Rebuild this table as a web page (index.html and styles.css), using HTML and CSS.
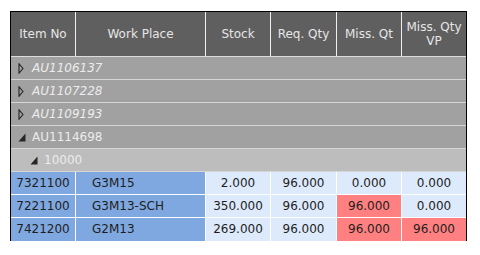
FILE: index.html
```html
<!DOCTYPE html>
<html>
<head>
<meta charset="utf-8">
<link rel="stylesheet" href="styles.css">
</head>
<body>
<div class="grid">
  <div class="row head">
    <div class="hc">Item No</div>
    <div class="hc">Work Place</div>
    <div class="hc">Stock</div>
    <div class="hc">Req. Qty</div>
    <div class="hc">Miss. Qt</div>
    <div class="hc">Miss. Qty VP</div>
  </div>
  <div class="group collapsed">
    <svg class="tri" width="6" height="11" viewBox="0 0 6 11"><path d="M1 0.8 L5 5.5 L1 10.2 Z" fill="none" stroke="#262626" stroke-width="1.1" stroke-linejoin="miter"/></svg>
    <span>AU1106137</span>
  </div>
  <div class="group collapsed">
    <svg class="tri" width="6" height="11" viewBox="0 0 6 11"><path d="M1 0.8 L5 5.5 L1 10.2 Z" fill="none" stroke="#262626" stroke-width="1.1" stroke-linejoin="miter"/></svg>
    <span>AU1107228</span>
  </div>
  <div class="group collapsed">
    <svg class="tri" width="6" height="11" viewBox="0 0 6 11"><path d="M1 0.8 L5 5.5 L1 10.2 Z" fill="none" stroke="#262626" stroke-width="1.1" stroke-linejoin="miter"/></svg>
    <span>AU1109193</span>
  </div>
  <div class="group">
    <svg class="tri exp" width="8" height="9" viewBox="0 0 8 9"><path d="M7.5 0.5 L7.5 8.5 L0.5 8.5 Z" fill="#262626"/></svg>
    <span>AU1114698</span>
  </div>
  <div class="group sub">
    <svg class="tri exp" width="8" height="9" viewBox="0 0 8 9"><path d="M7.5 0.5 L7.5 8.5 L0.5 8.5 Z" fill="#262626"/></svg>
    <span>10000</span>
  </div>
  <div class="row data">
    <div class="c key">7321100</div>
    <div class="c key left">G3M15</div>
    <div class="c">2.000</div>
    <div class="c">96.000</div>
    <div class="c">0.000</div>
    <div class="c">0.000</div>
  </div>
  <div class="row data">
    <div class="c key">7221100</div>
    <div class="c key left">G3M13-SCH</div>
    <div class="c">350.000</div>
    <div class="c">96.000</div>
    <div class="c miss">96.000</div>
    <div class="c">0.000</div>
  </div>
  <div class="row data last">
    <div class="c key">7421200</div>
    <div class="c key left">G2M13</div>
    <div class="c">269.000</div>
    <div class="c">96.000</div>
    <div class="c miss">96.000</div>
    <div class="c miss">96.000</div>
  </div>
</div>
</body>
</html>
```
FILE: styles.css
```css
html, body {
  margin: 0;
  padding: 0;
  background: #ffffff;
}
body {
  padding: 11px 0 0 10px;
  font-family: "DejaVu Sans", Verdana, sans-serif;
  font-size: 12px;
}
.grid {
  width: 455px;
  border-top: 1px solid #000;
  border-left: 1px solid #000;
  border-right: 1px solid #000;
}
.row {
  display: grid;
  grid-template-columns: 64px 130px 65px 66px 65px 65px;
}
.head {
  height: 44px;
  background: #5f5f5f;
  border-bottom: 1px solid #dcdcdc;
  color: #e6e6e6;
}
.hc {
  box-sizing: border-box;
  display: flex;
  align-items: center;
  justify-content: center;
  text-align: center;
  line-height: 14px;
  padding: 0 2px;
  border-left: 1px solid #f0f0f0;
}
.hc:first-child {
  border-left: none;
}
.group {
  height: 22px;
  display: flex;
  align-items: center;
  background: #a1a1a1;
  border-bottom: 1px solid #d6d6d6;
  color: #ececec;
  padding-left: 7px;
}
.group .tri {
  display: block;
  margin-right: 8px;
}
.group.collapsed span {
  font-style: italic;
}
.group .tri.exp {
  margin-right: 6px;
}
.group.sub {
  background: #bdbdbd;
  padding-left: 19px;
}
.data {
  height: 22px;
  border-bottom: 1px solid #ffffff;
  color: #1e1e1e;
}
.data.last {
  border-bottom: none;
  height: 23px;
}
.c {
  box-sizing: border-box;
  background: #ddeafc;
  border-left: 1px solid #ffffff;
  text-align: center;
  line-height: 22px;
  white-space: nowrap;
}
.c:first-child {
  border-left: none;
}
.c.key {
  background: #80a8e0;
}
.c.left {
  text-align: left;
  padding-left: 16px;
}
.c.miss {
  background: #ff8080;
}
```
